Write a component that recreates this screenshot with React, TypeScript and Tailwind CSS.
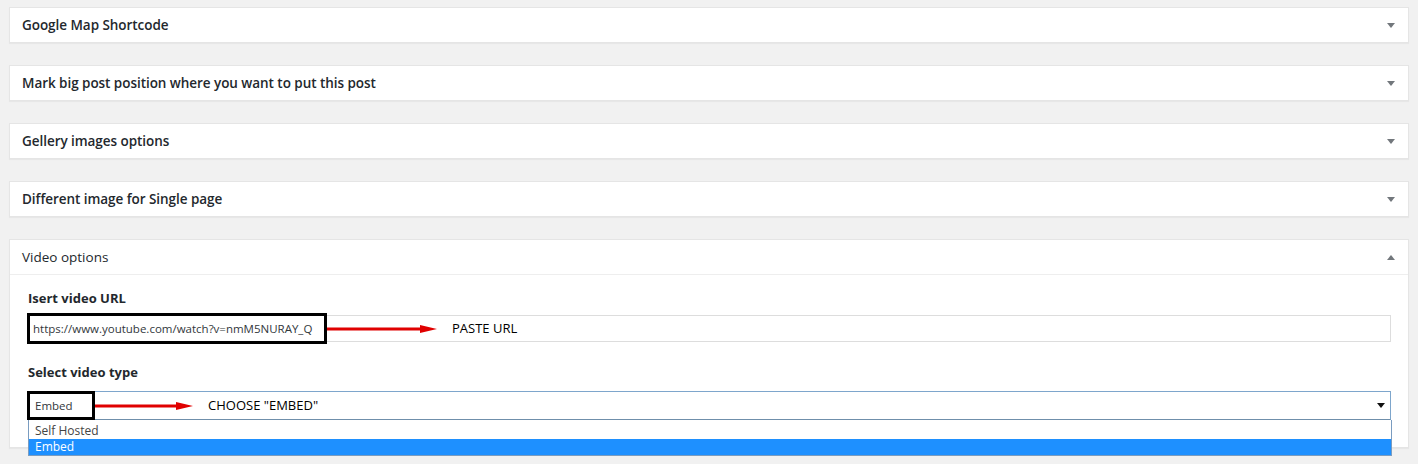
import { ReactNode } from 'react'

const font = { fontFamily: '"Open Sans", "Noto Sans", Arial, sans-serif' }

const Caret = ({ up = false, color = '#72777c' }: { up?: boolean; color?: string }) => (
  <svg width="8" height="5" viewBox="0 0 8 5" className="block">
    {up ? <polygon points="0,5 8,5 4,0" fill={color} /> : <polygon points="0,0 8,0 4,5" fill={color} />}
  </svg>
)

const RedArrow = ({ width }: { width: number }) => (
  <svg width={width} height="10" viewBox={`0 0 ${width} 10`} className="block shrink-0">
    <rect x="0" y="3.5" width={width - 14} height="3" fill="#e00000" />
    <polygon points={`${width - 17},1 ${width},5 ${width - 17},9`} fill="#e00000" />
  </svg>
)

const Box = ({ title, children }: { title: string; children?: ReactNode }) => (
  <div className="bg-white border border-[#e5e5e5] shadow-[0_1px_1px_rgba(0,0,0,0.04)]">
    <div className="h-[34px] flex items-center justify-between pl-[12px] pr-[13px]">
      <span className="text-[13.5px] font-semibold text-[#23282d] tracking-[-0.05px]">{title}</span>
      <Caret />
    </div>
    {children}
  </div>
)

export default function App() {
  return (
    <div className="min-h-screen bg-[#f1f1f1] pl-[9px] pr-[9px] pt-[7px]" style={font}>
      <div className="flex flex-col gap-[22px]">
        <Box title="Google Map Shortcode" />
        <Box title="Mark big post position where you want to put this post" />
        <Box title="Gellery images options" />
        <Box title="Different image for Single page" />

        {/* Video options */}
        <div className="bg-white border border-[#e5e5e5] shadow-[0_1px_1px_rgba(0,0,0,0.04)]">
          <div className="h-[35px] flex items-center justify-between pl-[12px] pr-[13px] border-b border-[#eeeeee]">
            <span className="text-[13.5px] text-[#23282d]">Video options</span>
            <Caret up />
          </div>
          <div className="pl-[18px] pr-[17px] pt-[14px] pb-[27px]">
            <div className="text-[13px] font-bold text-[#23282d] leading-[18px]">Isert video URL</div>
            <div className="mt-[8px] h-[27px] border border-[#dddddd] flex items-center">
              <div className="h-[31px] w-[300px] -ml-[2px] border-[3px] border-black flex items-center pl-[3px] text-[11.5px] text-[#32373c] bg-white">
                https://www.youtube.com/watch?v=nmM5NURAY_Q
              </div>
              <RedArrow width={110} />
              <span className="ml-[15px] text-[13px] text-black">PASTE URL</span>
            </div>

            <div className="mt-[21px] text-[13px] font-bold text-[#23282d] leading-[18px]">Select video type</div>
            <div className="relative mt-[10px]">
              <div className="h-[29px] border border-[#7ea6cc] border-b-[#6f8fab] flex items-center pr-[5px]">
                <div className="h-[29px] w-[68px] -ml-[2px] border-[3px] border-black flex items-center pl-[5px] text-[11.5px] text-[#32373c] bg-white">
                  Embed
                </div>
                <RedArrow width={98} />
                <span className="ml-[15px] text-[13px] text-black">CHOOSE "EMBED"</span>
                <span className="ml-auto">
                  <Caret color="#111111" />
                </span>
              </div>
              <div className="absolute left-0 right-[-1px] top-full pt-[2px] border border-t-0 border-[#7a9cc0] bg-white text-[12px] z-10">
                <div className="h-[17px] flex items-center pl-[6px] text-[#444444]">Self Hosted</div>
                <div className="h-[16px] flex items-center pl-[6px] bg-[#1e90ff] text-white">Embed</div>
              </div>
            </div>
          </div>
        </div>
      </div>
    </div>
  )
}
